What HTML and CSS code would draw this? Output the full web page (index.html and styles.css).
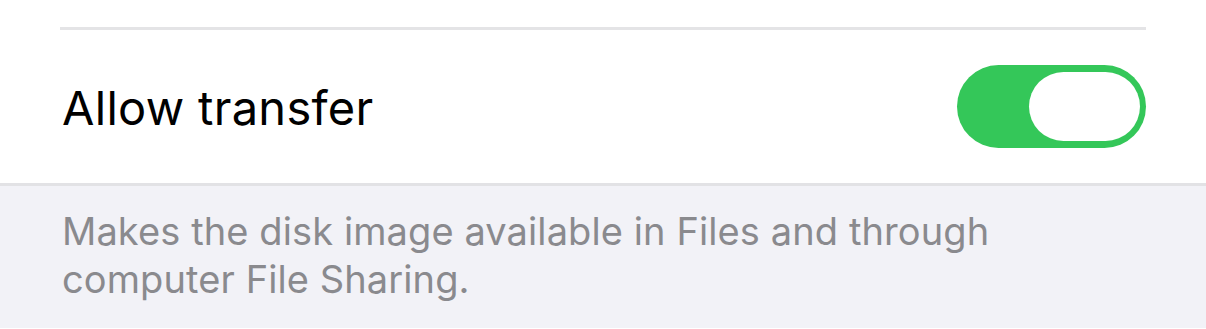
FILE: index.html
```html
<!DOCTYPE html>
<html lang="en">
	<head>
		<meta charset="UTF-8" />
		<meta name="viewport" content="width=device-width, initial-scale=1.0" />
		<title>Allow transfer</title>
		<link rel="stylesheet" href="styles.css">
	</head>
	<body>
		<div class="group">
			<div class="row-top"></div>
			<div class="row">
				<span class="row-label">Allow transfer</span>
				<div class="switch switch-on">
					<div class="switch-knob"></div>
				</div>
			</div>
		</div>
		<div class="footer">
			<p>Makes the disk image available in Files and through computer File Sharing.</p>
		</div>
	</body>
</html>
```

FILE: styles.css
```css
body {
	margin: 0;
	background: #ffffff;
	font-family: Inter, "Noto Sans", sans-serif;
}
.group {
	background: #ffffff;
	border-bottom: 3px solid #e2e2e5;
}
.row-top {
	height: 27px;
	margin: 0 60px;
	border-bottom: 3px solid #e4e4e6;
}
.row {
	height: 153px;
	margin: 0 60px 0 62px;
	display: flex;
	align-items: center;
	justify-content: space-between;
}
.row-label {
	font-size: 47px;
	color: #000000;
	letter-spacing: 0.3px;
	padding-top: 2px;
}
.switch {
	width: 189px;
	height: 83px;
	box-sizing: border-box;
	border-radius: 42px;
	padding: 7px 6px;
	display: flex;
	justify-content: flex-end;
}
.switch-on {
	background: #34c759;
}
.switch-knob {
	width: 111px;
	height: 69px;
	border-radius: 35px;
	background: #ffffff;
}
.footer {
	background: #f2f2f7;
	height: 142px;
	padding: 0 60px 0 62px;
	box-sizing: border-box;
	overflow: hidden;
}
.footer p {
	margin: 0;
	padding-top: 21px;
	font-size: 38px;
	line-height: 48px;
	letter-spacing: 0.1px;
	color: #8a8a8e;
	max-width: 1000px;
}
```
